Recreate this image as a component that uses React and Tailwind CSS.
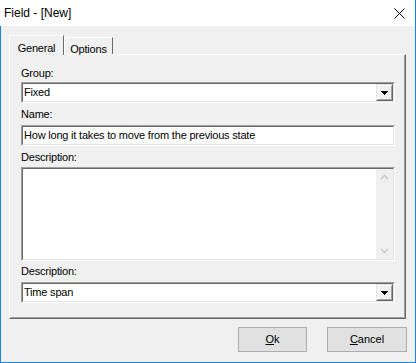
import React from "react";

const font = { fontFamily: '"Liberation Sans", Arial, sans-serif' };

function Sunken({ className = "", innerClass = "", children }) {
  return (
    <div className={`border border-t-[#a0a0a0] border-l-[#a0a0a0] border-b-white border-r-white ${className}`}>
      <div className={`h-full border border-t-[#696969] border-l-[#696969] border-b-[#e3e3e3] border-r-[#e3e3e3] bg-white ${innerClass}`}>
        {children}
      </div>
    </div>
  );
}

function DropArrow() {
  return (
    <svg width="7" height="4" viewBox="0 0 7 4" shapeRendering="crispEdges">
      <rect x="0" y="0" width="7" height="1" fill="#000" />
      <rect x="1" y="1" width="5" height="1" fill="#000" />
      <rect x="2" y="2" width="3" height="1" fill="#000" />
      <rect x="3" y="3" width="1" height="1" fill="#000" />
    </svg>
  );
}

function Select({ value }) {
  return (
    <Sunken className="h-[21px]" innerClass="flex items-stretch">
      <div className="flex-1 flex items-center pl-[1px] text-[11px] tracking-[-0.2px] text-black">{value}</div>
      <div className="w-[17px] border border-t-[#e3e3e3] border-l-[#e3e3e3] border-b-[#696969] border-r-[#696969]">
        <div className="h-full border border-t-white border-l-white border-b-[#a0a0a0] border-r-[#a0a0a0] bg-[#f0f0f0] flex items-center justify-center">
          <DropArrow />
        </div>
      </div>
    </Sunken>
  );
}

function Label({ children, className = "" }) {
  return <div className={`h-[13px] leading-[13px] text-[11px] tracking-[-0.2px] text-black ${className}`}>{children}</div>;
}

function Chevron({ up }) {
  return (
    <svg width="9" height="6" viewBox="0 0 9 6">
      <polyline
        points={up ? "1,5 4.5,1.5 8,5" : "1,1 4.5,4.5 8,1"}
        fill="none"
        stroke="#c6c6c6"
        strokeWidth="1.4"
      />
    </svg>
  );
}

export default function App() {
  return (
    <div style={font} className="w-[416px] h-[363px] bg-[#f0f0f0] flex flex-col border-r border-b border-[#1883d7] overflow-hidden">
      {/* Title bar */}
      <div className="h-[26px] bg-white flex items-center justify-between pl-[4px] pr-[10px] shrink-0">
        <span className="text-[12px] text-black">Field - [New]</span>
        <svg width="11" height="11" viewBox="0 0 11 11">
          <path d="M0.5 0.5 L10.5 10.5 M10.5 0.5 L0.5 10.5" stroke="#000" strokeWidth="1" />
        </svg>
      </div>

      <div className="flex-1 flex flex-col border-l border-[#1883d7]">
        {/* Tabs */}
        <div className="pt-[9px] pl-[8px] flex items-end h-[29px] mb-[-1px] relative z-10">
          <div className="w-[55px] h-[20px] bg-[#f0f0f0] border-l border-t border-white border-r border-r-[#696969] flex items-start justify-center pt-[4px] text-[11px] tracking-[-0.2px] text-black">
            General
          </div>
          <div className="w-[49px] h-[17px] mb-[1px] bg-[#f0f0f0] border-l border-t border-white border-r border-r-[#696969] flex items-start justify-center pt-[3px] text-[11px] tracking-[-0.2px] text-black">
            Options
          </div>
        </div>

        {/* Panel */}
        <div className="ml-[8px] w-[397px] h-[265px] border-t border-l border-white border-r border-b border-r-[#696969] border-b-[#696969]">
          <div className="h-full border-r border-b border-r-[#a0a0a0] border-b-[#a0a0a0] pl-[11px] pr-[9px] pt-[12px] flex flex-col">
            <Label>Group:</Label>
            <div className="mt-[2px]">
              <Select value="Fixed" />
            </div>
            <Label className="mt-[5px]">Name:</Label>
            <div className="mt-[4px]">
              <Sunken className="h-[21px]" innerClass="flex items-center pl-[1px] text-[11px] tracking-[-0.2px] text-black">
                How long it takes to move from the previous state
              </Sunken>
            </div>
            <Label className="mt-[5px]">Description:</Label>
            <div className="mt-[3px]">
              <Sunken className="h-[94px]" innerClass="flex">
                <div className="flex-1" />
                <div className="w-[17px] bg-[#f0f0f0] flex flex-col items-center justify-between py-[5px]">
                  <Chevron up />
                  <Chevron />
                </div>
              </Sunken>
            </div>
            <Label className="mt-[4px]">Description:</Label>
            <div className="mt-[4px]">
              <Select value="Time span" />
            </div>
          </div>
        </div>

        {/* Buttons */}
        <div className="flex justify-end gap-[20px] pr-[8px] mt-[8px]">
          <div className="w-[69px] h-[25px] bg-[#e1e1e1] border border-[#adadad] flex items-center justify-center text-[11px] text-black">
            <span><span className="underline">O</span>k</span>
          </div>
          <div className="w-[80px] h-[25px] bg-[#e1e1e1] border border-[#adadad] flex items-center justify-center text-[11px] text-black">
            <span><span className="underline">C</span>ancel</span>
          </div>
        </div>
      </div>
    </div>
  );
}
